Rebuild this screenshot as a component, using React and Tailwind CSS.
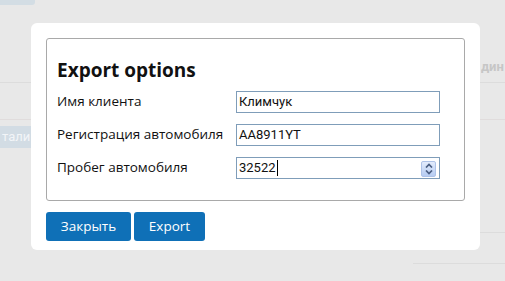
import React from "react";

function Spinner() {
  return (
    <div className="absolute right-[3px] top-[3px] w-[15px] h-[16px] rounded-[2px] border border-[#aec3e8] bg-gradient-to-b from-[#e3ecfc] to-[#b6ccf2] flex flex-col items-center justify-center gap-[2px]">
      <svg width="8" height="5" viewBox="0 0 8 5"><path d="M1 4.5 L4 1.5 L7 4.5" fill="none" stroke="#4a5e82" strokeWidth="1.7" /></svg>
      <svg width="8" height="5" viewBox="0 0 8 5"><path d="M1 0.5 L4 3.5 L7 0.5" fill="none" stroke="#4a5e82" strokeWidth="1.7" /></svg>
    </div>
  );
}

function Row({ label, value, spinner, caret }) {
  return (
    <div className="flex items-center h-[22px]">
      <div className="w-[179px] text-[13.5px] text-[#111] leading-none" style={{ fontFamily: "'Open Sans', sans-serif" }}>{label}</div>
      <div className="relative w-[204px] h-[22px] border border-[#7f9db9] bg-white flex items-center pl-[2px] text-[13px] text-[#111]">
        <span>{value}</span>
        {caret && <span className="w-px h-[16px] bg-black ml-[1px]" />}
        {spinner && <Spinner />}
      </div>
    </div>
  );
}

export default function App() {
  return (
    <div className="relative w-[505px] h-[281px] bg-[#e8e8e8] overflow-hidden" style={{ fontFamily: "Roboto, 'Noto Sans', sans-serif" }}>
      {/* background page (dimmed) */}
      <div className="flex flex-col">
        <div className="h-[83px] border-b border-[#dcdcdc] flex justify-between">
          <div className="w-[35px] h-[5px] bg-[#d3dde4] rounded-br-[3px]" />
          <div className="pt-[57px] text-[13px] font-bold text-[#c6c6c6] w-[24px] overflow-hidden whitespace-nowrap">дин</div>
        </div>
        <div className="h-[37px] border-b border-[#e0dcdc]" />
        <div className="pt-[6px] flex">
          <div className="w-[31px] h-[22px] bg-[#d2dce4] text-[13px] text-[#f2f5f8] flex items-center pl-[2px] overflow-hidden">тали</div>
        </div>
        <div className="mt-[84px] ml-[480px] border-b border-[#dcdcdc]" />
        <div className="mt-[30px] ml-[413px] border-b border-[#dcdcdc]" />
      </div>

      {/* modal overlay */}
      <div className="absolute left-[31px] top-[23px] w-[449px] h-[227px] bg-white rounded-[6px] px-[15px] pt-[15px]">
        <div className="h-[163px] border border-[#a9a9a9] rounded-[3px] pl-[10px] pt-[19px]">
          <div className="text-[19px] font-bold text-[#111] leading-[25px]" style={{ fontFamily: "'Open Sans', sans-serif" }}>Export options</div>
          <div className="mt-[8px] flex flex-col gap-[11px]">
            <Row label="Имя клиента" value="Климчук" />
            <Row label="Регистрация автомобиля" value="AA8911YT" />
            <Row label="Пробег автомобиля" value="32522" spinner caret />
          </div>
        </div>
        <div className="mt-[11px] flex gap-[3px]" style={{ fontFamily: "'Open Sans', sans-serif" }}>
          <button className="w-[85px] h-[29px] rounded-[3px] bg-[#0f70b7] text-white text-[13.5px]">Закрыть</button>
          <button className="w-[71px] h-[29px] rounded-[3px] bg-[#0f70b7] text-white text-[13.5px]">Export</button>
        </div>
      </div>
    </div>
  );
}
